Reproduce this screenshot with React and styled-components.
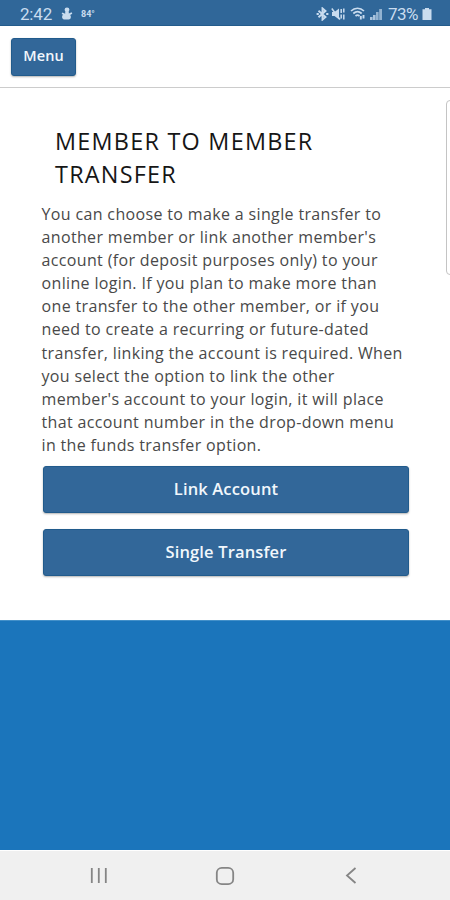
import React from 'react'
import styled, { createGlobalStyle } from 'styled-components'

const description = [
  'You can choose to make a single transfer to',
  "another member or link another member's",
  'account (for deposit purposes only) to your',
  'online login. If you plan to make more than',
  'one transfer to the other member, or if you',
  'need to create a recurring or future-dated',
  'transfer, linking the account is required. When',
  'you select the option to link the other',
  "member's account to your login, it will place",
  'that account number in the drop-down menu',
  'in the funds transfer option.',
]

const StatusBar = () => (
  <Status>
    <div className="left">
      <span className="time">2:42</span>
      <svg width="12" height="13" viewBox="0 0 12 13" fill="currentColor">
        <circle cx="6" cy="2.8" r="2.4" />
        <path d="M4.200 4.500h3.600v2.100l2.800-1.300.7 1.400-2.200 1.400c1.400 1.300.9 4.500-1.400 4.500h-4C1.100 12.600.2 9.200 2.200 7.800L.6 7l.8-1.400 2.800 1.100z" />
      </svg>
      <span className="temp">84°</span>
    </div>
    <div className="right">
      <svg width="13" height="14" viewBox="0 0 13 14" fill="none" stroke="currentColor" strokeWidth="1.900">
        <path d="M2.500 3.800 9.500 10 6.500 12.600V1.400L9.500 4 2.500 10.200" />
        <path d="M.6 7h2.200M10.200 7h2.200" />
      </svg>
      <svg className="mute" width="14" height="14" viewBox="0 0 14 14" fill="currentColor">
        <path d="M1 5h2.500L8 1.500v11L3.500 9H1z" />
        <path d="M.8 1.500 9 12.500M10.200 2v4M12.800 1.500v4M10.200 7.500v4M12.800 7.500v5" fill="none" stroke="currentColor" strokeWidth="1.500" />
      </svg>
      <svg className="wifi" width="16" height="13" viewBox="0 0 16 13" fill="none" stroke="currentColor" strokeWidth="1.700">
        <path d="M1 4c3.800-3.700 9.200-3.700 13 0M3.300 6.500c2.500-2.300 5.900-2.300 8.400 0M5.500 9c1.200-1 2.800-1 4 0" />
        <path d="M10.800 9v3.500M13.500 8v3.500" strokeWidth="1.900" />
      </svg>
      <svg className="signal" width="12" height="12" viewBox="0 0 12 12" fill="currentColor">
        <path d="M0 9h2.600v3H0zM3 7h2.600v5H3z" opacity=".8" />
        <path d="M6 4h2.600v8H6zM9.200 1H12v11H9.200z" opacity=".65" />
      </svg>
      <span className="percent">73%</span>
      <svg width="10" height="12" viewBox="0 0 10 12" fill="currentColor">
        <path d="M3 0h4v1.300h2.500V12h-9V1.300H3z" />
      </svg>
    </div>
  </Status>
)

const NavigationBar = () => (
  <Navigation>
    <svg width="18" height="17" viewBox="0 0 18 17">
      <path d="M1.800 1v15M8.800 1v15M15.800 1v15" />
    </svg>
    <svg width="20" height="20" viewBox="0 0 20 20">
      <rect x="1.800" y="1.800" width="16.400" height="16.400" rx="5" />
    </svg>
    <svg width="12" height="17" viewBox="0 0 12 17">
      <path d="M10.500 1 2 8.500l8.500 7.500" />
    </svg>
  </Navigation>
)

const App = () => {
  return (
    <Container>
      <GlobalStyle />
      <StatusBar />
      <Toolbar>
        <MenuButton>Menu</MenuButton>
      </Toolbar>
      <Content>
        <Title>
          MEMBER TO MEMBER
          <br />
          TRANSFER
        </Title>
        <Description>
          {description.map((line) => (
            <span key={line}>{line}</span>
          ))}
        </Description>
        <Actions>
          <ActionButton>Link Account</ActionButton>
          <ActionButton>Single Transfer</ActionButton>
        </Actions>
        <SidePanel />
      </Content>
      <Footer />
      <NavigationBar />
    </Container>
  )
}

const GlobalStyle = createGlobalStyle`
  * {
    box-sizing: border-box;
  }
  body {
    margin: 0;
  }
`

const Container = styled.div`
  width: 450px;
  height: 900px;
  display: flex;
  flex-direction: column;
  overflow: hidden;
  background-color: #fff;
  font-family: 'Open Sans', sans-serif;
`

const Status = styled.div`
  height: 26px;
  flex-shrink: 0;
  display: flex;
  justify-content: space-between;
  padding: 2px 18px 0 20px;
  background-color: #306799;
  border-bottom: 1px solid #235c8c;
  color: #c9dcef;
  font-family: Roboto, sans-serif;
  .left,
  .right{
    display: flex;
    align-items: center;
  }
  .time{
    width: 41px;
    font-size: 17px;
    letter-spacing: -0.2px;
  }
  .temp{
    margin-left: 8px;
    font-size: 9px;
    font-weight: 700;
  }
  .mute{
    margin-left: 2px;
  }
  .wifi{
    margin-left: 5px;
  }
  .signal{
    margin-left: 4px;
  }
  .percent{
    width: 34px;
    margin-left: 6px;
    font-size: 17px;
    letter-spacing: -0.5px;
  }
`

const Toolbar = styled.div`
  height: 62px;
  flex-shrink: 0;
  padding: 12px 11px;
  border-bottom: 1px solid #ccc;
`

const Button = styled.button`
  display: flex;
  align-items: center;
  justify-content: center;
  padding: 0 0 2px;
  border: 1px solid #215b8c;
  border-radius: 3px;
  background-color: #326799;
  box-shadow: 0 1px 2px rgba(0, 0, 0, 0.3);
  color: #f1f7fc;
  font-family: inherit;
  font-weight: 600;
`

const MenuButton = styled(Button)`
  width: 65px;
  height: 38px;
  padding-bottom: 3px;
  font-size: 14.500px;
  letter-spacing: 0.1px;
`

const Content = styled.main`
  position: relative;
  height: 532px;
  flex-shrink: 0;
  padding: 37px 41px 0;
`

const Title = styled.h1`
  margin: 0 0 0 14px;
  color: #161616;
  font-size: 23.400px;
  font-weight: 400;
  line-height: 33px;
  letter-spacing: 1.250px;
  white-space: nowrap;
`

const Description = styled.p`
  margin: 12px 0 0 0.500px;
  color: #494949;
  font-size: 16px;
  line-height: 23.100px;
  letter-spacing: 0.350px;
  white-space: nowrap;
  span{
    display: block;
  }
`

const Actions = styled.div`
  display: flex;
  flex-direction: column;
  gap: 16px;
  margin: 9px 0 0 2px;
`

const ActionButton = styled(Button)`
  width: 366px;
  height: 47px;
  font-size: 16.500px;
  letter-spacing: 0.150px;
`

const SidePanel = styled.div`
  position: absolute;
  top: 12px;
  right: -6px;
  width: 10px;
  height: 175px;
  border: 1px solid #c4c4c4;
  border-radius: 4px;
`

const Footer = styled.div`
  flex: 1;
  background-color: #1b75bb;
  border-top: 1px solid #4390c9;
`

const Navigation = styled.nav`
  height: 50px;
  flex-shrink: 0;
  display: flex;
  align-items: center;
  justify-content: space-between;
  padding: 0 93px 0 90px;
  background-color: #f0f0f0;
  border-top: 1px solid #fff;
  svg{
    fill: none;
    stroke: #858585;
    stroke-width: 1.800;
  }
  svg:nth-child(2){
    margin-right: 4px;
  }
`

export default App
